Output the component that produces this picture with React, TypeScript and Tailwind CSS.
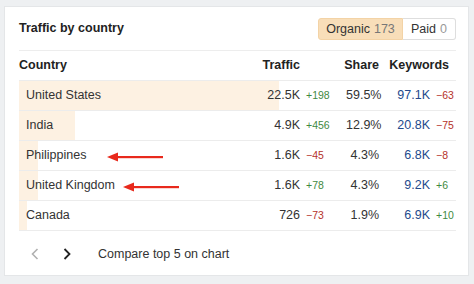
import React from "react";

type Row = {
  country: string;
  traffic: string;
  tDelta: string;
  tUp: boolean;
  share: number;
  kw: string;
  kDelta: string;
  kUp: boolean;
  arrow?: number;
};

const rows: Row[] = [
  { country: "United States", traffic: "22.5K", tDelta: "+198", tUp: true, share: 59.5, kw: "97.1K", kDelta: "\u221263", kUp: false },
  { country: "India", traffic: "4.9K", tDelta: "+456", tUp: true, share: 12.9, kw: "20.8K", kDelta: "\u221275", kUp: false },
  { country: "Philippines", traffic: "1.6K", tDelta: "\u221245", tUp: false, share: 4.3, kw: "6.8K", kDelta: "\u22128", kUp: false, arrow: 21 },
  { country: "United Kingdom", traffic: "1.6K", tDelta: "+78", tUp: true, share: 4.3, kw: "9.2K", kDelta: "+6", kUp: true, arrow: 8 },
  { country: "Canada", traffic: "726", tDelta: "\u221273", tUp: false, share: 1.9, kw: "6.9K", kDelta: "+10", kUp: true },
];

function Arrow({ ml }: { ml: number }) {
  return (
    <svg width="56" height="10" viewBox="0 0 56 10" style={{ marginLeft: ml }} className="mt-[3px]">
      <polygon points="0,5 11,0.5 11,9.5" fill="#e8291c" />
      <rect x="9" y="4" width="47" height="2.2" fill="#e8291c" />
    </svg>
  );
}

export default function App() {
  return (
    <div
      className="w-[474px] h-[284px] bg-[#eef0f2] pt-[6px] pl-[4px] text-[#333] text-[12.5px]"
      style={{ fontFamily: '"Liberation Sans", Arial, sans-serif' }}
    >
      <div className="w-[465px] h-[270px] bg-white border border-[#e4e6e8] pl-[14px] pr-[12px] flex flex-col">
        <div className="h-[44px] flex items-center justify-between border-b border-[#ededed] shrink-0">
          <div className="font-bold text-[12.5px] text-[#222]">Traffic by country</div>
          <div className="flex h-[22px] mt-[1px]">
            <div className="h-full w-[85px] flex items-center justify-center bg-[#f8deb9] border border-[#f3d3a6] rounded-l-[3px] text-[12.5px]">
              <span className="text-[#333]">Organic</span>
              <span className="text-[#777] ml-[4px]">173</span>
            </div>
            <div className="h-full w-[53px] flex items-center justify-center bg-white border border-l-0 border-[#dedede] rounded-r-[3px]">
              <span className="text-[#333]">Paid</span>
              <span className="text-[#999] ml-[4px]">0</span>
            </div>
          </div>
        </div>
        <div className="h-[30px] flex items-center border-b border-[#ececec] font-bold text-[#222] shrink-0">
          <div className="flex-1">Country</div>
          <div className="w-[60px] text-right">Traffic</div>
          <div className="w-[79px] text-right">Share</div>
          <div className="w-[70px] text-right">Keywords</div>
          <div className="w-[7px]" />
        </div>
        {rows.map((r) => (
          <div key={r.country} className="relative h-[30px] flex items-center border-b border-[#ececec] shrink-0">
            <div className="absolute left-0 top-0 bottom-0 bg-[#fdf1e2]" style={{ width: `${r.share}%` }} />
            <div className="relative flex-1 flex items-center pl-[7px]">
              <span>{r.country}</span>
              {r.arrow !== undefined && <Arrow ml={r.arrow} />}
            </div>
            <div className="relative w-[60px] text-right">{r.traffic}</div>
            <div className={`relative w-[46px] pl-[6px] text-[10.5px] ${r.tUp ? "text-[#3f8a3f]" : "text-[#b5322a]"}`}>{r.tDelta}</div>
            <div className="relative w-[33px] text-right">{r.share}%</div>
            <div className="relative w-[51px] text-right text-[#244a8c]">{r.kw}</div>
            <div className={`relative w-[26px] pl-[6px] text-[10.5px] whitespace-nowrap ${r.kUp ? "text-[#3f8a3f]" : "text-[#b5322a]"}`}>{r.kDelta}</div>
          </div>
        ))}
        <div className="flex-1 flex items-center pt-[2px]">
          <svg width="8" height="12" viewBox="0 0 8 12" className="ml-[12px]">
            <polyline points="6.5,1 1.5,6 6.5,11" fill="none" stroke="#b0b0b0" strokeWidth="1.6" />
          </svg>
          <svg width="8" height="12" viewBox="0 0 8 12" className="ml-[24px]">
            <polyline points="1.5,1 6.5,6 1.5,11" fill="none" stroke="#222" strokeWidth="1.8" />
          </svg>
          <span className="ml-[27px] text-[#333]">Compare top 5 on chart</span>
        </div>
      </div>
    </div>
  );
}
